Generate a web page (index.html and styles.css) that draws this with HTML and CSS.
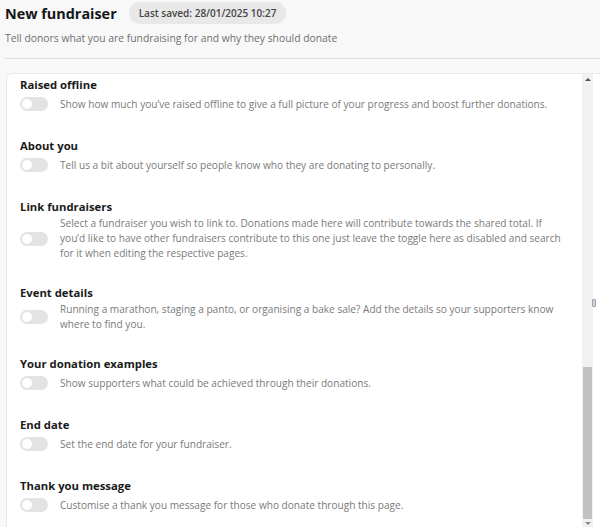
FILE: index.html
```html
<!DOCTYPE html>
<html lang="en">
<head>
<meta charset="utf-8">
<title>New fundraiser</title>
<link rel="stylesheet" href="styles.css">
</head>
<body>
<header class="page-header">
  <div class="title-row">
    <h1 class="page-title">New fundraiser</h1>
    <span class="saved-badge">Last saved: 28/01/2025 10:27</span>
  </div>
  <p class="subtitle">Tell donors what you are fundraising for and why they should donate</p>
</header>
<div class="divider"></div>
<main class="card">
  <div class="card-content">
    <section class="option">
      <h2 class="option-title">Raised offline</h2>
      <div class="option-row">
        <span class="toggle"><span class="knob"></span></span>
        <p class="option-desc">Show how much you’ve raised offline to give a full picture of your progress and boost further donations.</p>
      </div>
    </section>
    <section class="option">
      <h2 class="option-title">About you</h2>
      <div class="option-row">
        <span class="toggle"><span class="knob"></span></span>
        <p class="option-desc">Tell us a bit about yourself so people know who they are donating to personally.</p>
      </div>
    </section>
    <section class="option">
      <h2 class="option-title">Link fundraisers</h2>
      <div class="option-row">
        <span class="toggle"><span class="knob"></span></span>
        <p class="option-desc">Select a fundraiser you wish to link to. Donations made here will contribute towards the shared total. If you’d like to have other fundraisers contribute to this one just leave the toggle here as disabled and search for it when editing the respective pages.</p>
      </div>
    </section>
    <section class="option">
      <h2 class="option-title">Event details</h2>
      <div class="option-row">
        <span class="toggle"><span class="knob"></span></span>
        <p class="option-desc">Running a marathon, staging a panto, or organising a bake sale? Add the details so your supporters know where to find you.</p>
      </div>
    </section>
    <section class="option">
      <h2 class="option-title">Your donation examples</h2>
      <div class="option-row">
        <span class="toggle"><span class="knob"></span></span>
        <p class="option-desc">Show supporters what could be achieved through their donations.</p>
      </div>
    </section>
    <section class="option">
      <h2 class="option-title">End date</h2>
      <div class="option-row">
        <span class="toggle"><span class="knob"></span></span>
        <p class="option-desc">Set the end date for your fundraiser.</p>
      </div>
    </section>
    <section class="option">
      <h2 class="option-title">Thank you message</h2>
      <div class="option-row">
        <span class="toggle"><span class="knob"></span></span>
        <p class="option-desc">Customise a thank you message for those who donate through this page.</p>
      </div>
    </section>
  </div>
  <div class="scrollbar">
    <span class="arrow-up"></span>
    <span class="track-space"></span>
    <span class="thumb"></span>
    <span class="arrow-down"></span>
  </div>
</main>
<span class="split-handle"></span>
</body>
</html>
```

FILE: styles.css
```css
* { box-sizing: border-box; }
html, body { height: 100%; }
body {
  margin: 0;
  background: #f8f8f8;
  font-family: "Open Sans", "Liberation Sans", sans-serif;
  color: #1d1d1d;
  overflow: hidden;
  display: flex;
  flex-direction: column;
  position: relative;
}
.page-header {
  padding: 2px 5px 0;
}
.title-row {
  display: flex;
  align-items: center;
  gap: 12px;
  height: 22px;
}
.page-title {
  margin: 0;
  font-size: 14.4px;
  font-weight: 700;
  color: #151515;
}
.saved-badge {
  display: inline-flex;
  align-items: center;
  height: 22px;
  padding: 0 10px;
  border-radius: 11px;
  background: #e8e8e8;
  font-size: 10px;
  font-weight: 600;
  color: #444;
}
.subtitle {
  margin: 7px 0 0;
  font-size: 10.35px;
  line-height: 14px;
  color: #6f6f6f;
}
.divider {
  margin: 13px 0 0 5px;
  height: 1px;
  background: #dedede;
}
.card {
  flex: 1;
  min-height: 0;
  margin: 14px 0 0 6px;
  background: #fff;
  border: 1px solid #e9e9e9;
  border-right: none;
  border-bottom: none;
  border-radius: 6px 0 0 0;
  display: flex;
  padding-right: 7px;
  overflow: hidden;
}
.card-content {
  flex: 1;
  padding: 1px 16px 0 13px;
  overflow: hidden;
}
.option {
  margin-bottom: 22px;
}
.option-title {
  margin: 0;
  font-size: 11.3px;
  line-height: 19px;
  font-weight: 700;
  color: #1a1a1a;
}
.option-row {
  display: flex;
  align-items: center;
  gap: 12px;
  min-height: 20px;
}
.toggle {
  flex: none;
  width: 28px;
  height: 14px;
  border-radius: 7px;
  background: #e3e3e3;
  padding: 2px;
  display: flex;
  align-items: center;
}
.knob {
  width: 10px;
  height: 10px;
  border-radius: 50%;
  background: #fff;
}
.option-desc {
  margin: 0;
  font-size: 10.1px;
  line-height: 15px;
  color: #7a7a7a;
}
.scrollbar {
  flex: none;
  width: 11px;
  background: #f1f1f1;
  display: flex;
  flex-direction: column;
  align-items: center;
}
.arrow-up {
  height: 10px;
  width: 100%;
  display: flex;
  justify-content: center;
  align-items: center;
}
.arrow-up::before {
  content: "";
  border-left: 3px solid transparent;
  border-right: 3px solid transparent;
  border-bottom: 3px solid #555;
}
.track-space {
  height: 283px;
}
.thumb {
  width: 9px;
  height: 152px;
  background: #c1c1c1;
}
.arrow-down {
  height: 8px;
  width: 100%;
  display: flex;
  justify-content: center;
  align-items: center;
}
.arrow-down::before {
  content: "";
  border-left: 3px solid transparent;
  border-right: 3px solid transparent;
  border-top: 3px solid #888;
}
.split-handle {
  position: absolute;
  left: 592px;
  top: 299px;
  width: 4px;
  height: 8px;
  border: 1px solid #9aa3ad;
  background: #d4d8dd;
  border-radius: 1px;
}
```
